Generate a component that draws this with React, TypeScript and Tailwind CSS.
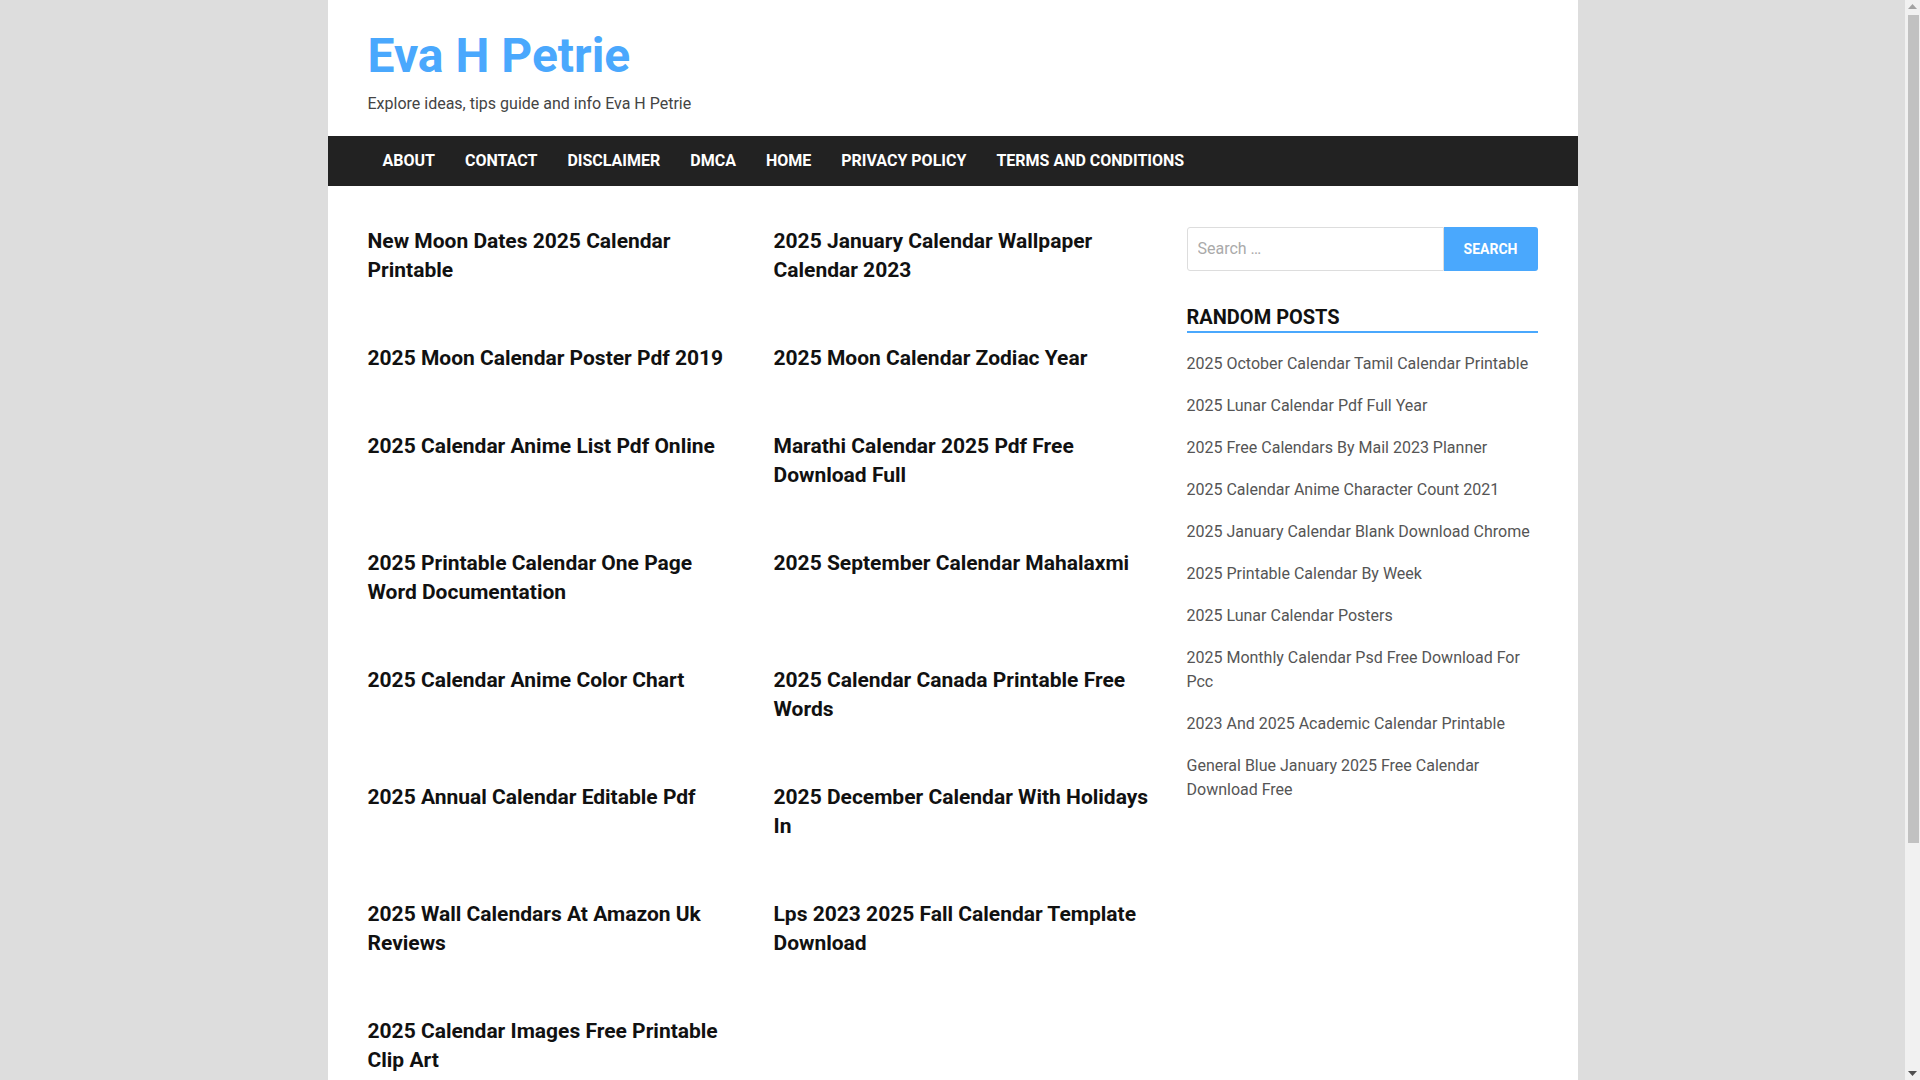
import React from "react";

const NAV = ["About", "Contact", "Disclaimer", "DMCA", "Home", "Privacy Policy", "Terms and Conditions"];

const POSTS = [
  "New Moon Dates 2025 Calendar Printable",
  "2025 January Calendar Wallpaper Calendar 2023",
  "2025 Moon Calendar Poster Pdf 2019",
  "2025 Moon Calendar Zodiac Year",
  "2025 Calendar Anime List Pdf Online",
  "Marathi Calendar 2025 Pdf Free Download Full",
  "2025 Printable Calendar One Page Word Documentation",
  "2025 September Calendar Mahalaxmi",
  "2025 Calendar Anime Color Chart",
  "2025 Calendar Canada Printable Free Words",
  "2025 Annual Calendar Editable Pdf",
  "2025 December Calendar With Holidays In",
  "2025 Wall Calendars At Amazon Uk Reviews",
  "Lps 2023 2025 Fall Calendar Template Download",
  "2025 Calendar Images Free Printable Clip Art",
];

const RANDOM = [
  "2025 October Calendar Tamil Calendar Printable",
  "2025 Lunar Calendar Pdf Full Year",
  "2025 Free Calendars By Mail 2023 Planner",
  "2025 Calendar Anime Character Count 2021",
  "2025 January Calendar Blank Download Chrome",
  "2025 Printable Calendar By Week",
  "2025 Lunar Calendar Posters",
  "2025 Monthly Calendar Psd Free Download For Pcc",
  "2023 And 2025 Academic Calendar Printable",
  "General Blue January 2025 Free Calendar Download Free",
];

function FakeScrollbar() {
  return (
    <div className="fixed right-0 top-0 flex h-screen w-[15px] flex-col items-center bg-[#f1f1f1]">
      <svg width="9" height="5" viewBox="0 0 9 5" className="mt-[4px]">
        <path d="M0 5 L4.5 0 L9 5 Z" fill="#a3a3a3" />
      </svg>
      <div className="ml-[1px] mt-[6px] h-[828px] w-[11px] bg-[#c1c1c1]" />
      <div className="flex-1" />
      <svg width="9" height="5" viewBox="0 0 9 5" className="mb-[4px]">
        <path d="M0 0 L9 0 L4.5 5 Z" fill="#505050" />
      </svg>
    </div>
  );
}

export default function App() {
  return (
    <div className="min-h-screen bg-[#dddddd] pr-[15px] font-['Roboto',_'Liberation_Sans',_sans-serif]">
      <div className="mx-auto w-[1250px] bg-white pb-[40px]">
        {/* header */}
        <header className="px-[40px] pt-[28px] pb-[20px]">
          <div className="text-[48px] font-bold leading-[56px] text-[#4aa8fd]">Eva H Petrie</div>
          <div className="mt-[8px] text-[16px] leading-[24px] text-[#444444]">
            Explore ideas, tips guide and info Eva H Petrie
          </div>
        </header>

        <nav className="flex h-[50px] items-center bg-[#222222] px-[40px]">
          {NAV.map((item) => (
            <a
              key={item}
              className="px-[15px] text-[16px] font-bold uppercase leading-[50px] text-white"
            >
              {item}
            </a>
          ))}
        </nav>

        <div className="flex gap-[38px] px-[40px] pt-[41px]">
          <main className="w-[781px] shrink-0">
            <div className="grid grid-cols-2 gap-x-[31px] gap-y-[59px]">
              {POSTS.map((p) => (
                <h2 key={p} className="text-[21px] font-bold leading-[29px] text-[#111111]">
                  {p}
                </h2>
              ))}
            </div>
          </main>

          <aside className="w-[351px] shrink-0">
            <form className="flex h-[44px]">
              <input
                placeholder="Search …"
                className="min-w-0 flex-1 rounded-l-[3px] border border-[#dddddd] px-[10px] text-[16px] text-[#333333] placeholder:text-[#aaaaaa] outline-none"
              />
              <button
                type="button"
                className="w-[94px] rounded-r-[3px] bg-[#4aa8fd] text-[14px] font-bold uppercase text-white"
              >
                Search
              </button>
            </form>

            <div className="mt-[32px]">
              <h3 className="border-b-2 border-[#4aa8fd] text-[20px] font-bold uppercase leading-[28px] text-[#111111]">
                Random Posts
              </h3>
              <ul className="mt-[19px] flex flex-col gap-[18px]">
                {RANDOM.map((r) => (
                  <li key={r} className="text-[16px] leading-[24px] text-[#555555]">
                    {r}
                  </li>
                ))}
              </ul>
            </div>
          </aside>
        </div>
      </div>
      <FakeScrollbar />
    </div>
  );
}
